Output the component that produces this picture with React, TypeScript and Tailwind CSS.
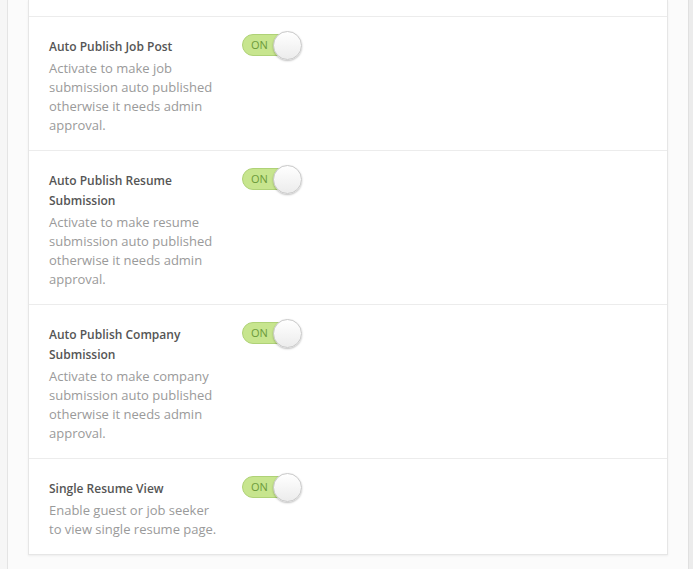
import { ReactNode } from 'react';

interface SettingProps {
  title: ReactNode;
  desc: ReactNode;
}

const Toggle = () => (
  <div className="relative w-[60px] h-[29px] -mt-[6px] shrink-0">
    <div className="absolute left-0 top-[3px] w-[54px] h-[22px] rounded-full bg-[#c7e58e] border border-[#afd277]">
      <span className="absolute left-[8px] top-[3px] text-[11px] leading-[14px] text-[#6c9a3a]">ON</span>
    </div>
    <div className="absolute left-[31px] top-0 w-[29px] h-[29px] rounded-full border border-[#c8c8c8] bg-gradient-to-b from-white to-[#ececec] shadow-[0_1px_2px_rgba(0,0,0,0.25)]" />
  </div>
);

const SettingRow = ({ title, desc }: SettingProps) => (
  <div className="flex border-t border-[#ececec] pt-[20px] pb-[15px] px-[20px]">
    <div className="w-[193px] shrink-0">
      <div className="w-[172px] text-[12px] leading-[20px] font-semibold text-[#555]">{title}</div>
      <div className="w-[172px] mt-[2px] text-[13px] leading-[19px] text-[#9a9a9a]">{desc}</div>
    </div>
    <Toggle />
  </div>
);

const App = () => {
  return (
    <div
      className="flex h-[569px] w-[693px] overflow-hidden bg-[#fbfbfb]"
      style={{ fontFamily: '"Open Sans", "Liberation Sans", sans-serif' }}
    >
      {/* left rail */}
      <div className="w-[8px] shrink-0 bg-[#f6f6f6] border-r border-[#e4e4e4]" />

      <div className="flex-1 pl-[20px] pr-[20px]">
        <div className="w-[640px] bg-white border-x border-b border-[#e6e6e6] shadow-[0_1px_2px_rgba(0,0,0,0.06)]">
          <div className="h-[16px]" />
          <SettingRow
            title="Auto Publish Job Post"
            desc="Activate to make job submission auto published otherwise it needs admin approval."
          />
          <SettingRow
            title="Auto Publish Resume Submission"
            desc="Activate to make resume submission auto published otherwise it needs admin approval."
          />
          <SettingRow
            title="Auto Publish Company Submission"
            desc="Activate to make company submission auto published otherwise it needs admin approval."
          />
          <SettingRow
            title="Single Resume View"
            desc="Enable guest or job seeker to view single resume page."
          />
        </div>
      </div>

      {/* scrollbar strip */}
      <div className="w-[5px] shrink-0 bg-[#ececec] border-l border-[#e0e0e0]" />
    </div>
  );
};

export default App;
